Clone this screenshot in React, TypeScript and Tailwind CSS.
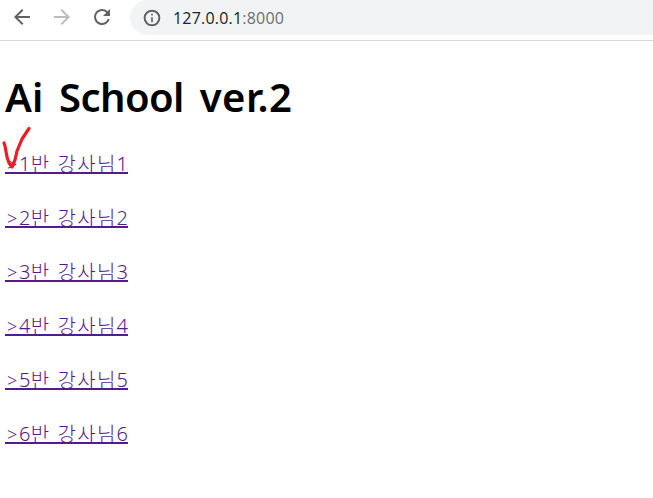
const rooms = [1, 2, 3, 4, 5, 6];

function Toolbar() {
  return (
    <header className="flex h-[41px] items-start border-b border-[#d5d7da] bg-white">
      <div className="flex h-[34px] w-[130px] shrink-0 items-center gap-4 pl-[10px]">
        <svg className="size-6" viewBox="0 0 24 24" fill="#5f6368">
          <path d="M20 11H7.83l5.59-5.59L12 4l-8 8 8 8 1.41-1.41L7.83 13H20v-2z" />
        </svg>
        <svg className="size-6" viewBox="0 0 24 24" fill="#babcbe">
          <path d="M12 4l-1.41 1.41L16.17 11H4v2h12.17l-5.58 5.59L12 20l8-8z" />
        </svg>
        <svg className="size-6" viewBox="0 0 24 24" fill="#5f6368">
          <path d="M17.65 6.35A7.958 7.958 0 0012 4a8 8 0 107.75 10h-2.08A6 6 0 1112 6c1.66 0 3.14.69 4.22 1.78L13 11h7V4l-2.35 2.35z" />
        </svg>
      </div>
      <div className="flex h-[35px] grow items-center rounded-l-full bg-[#f1f3f4] pl-[12px]">
        <svg className="size-5" viewBox="0 0 24 24" fill="#5f6368">
          <path d="M11 7h2v2h-2zm0 4h2v6h-2zm1-9a10 10 0 100 20 10 10 0 000-20zm0 17.6a7.6 7.6 0 110-15.2 7.6 7.6 0 010 15.2z" />
        </svg>
        <span className="ml-[11px] whitespace-nowrap font-['Open_Sans',sans-serif] text-[16px] leading-[34px] tracking-[0.2px] text-[#202124]">
          127.0.0.1<span className="text-[#6b6f73]">:8000</span>
        </span>
      </div>
    </header>
  );
}

export default function App() {
  return (
    <div className="h-[498px] overflow-hidden bg-white">
      <Toolbar />
      <main className="relative pl-[5px] pt-[29px]">
        <h1 className="h-[54px] whitespace-nowrap font-['Noto_Sans',sans-serif] text-[40px] font-semibold leading-[54px] [word-spacing:5.5px] text-black">
          Ai <span className="tracking-[-0.6px]">School</span> <span className="tracking-[0.5px]">ver.2</span>
        </h1>
        <ul className="mt-[26px] flex flex-col gap-[30px]">
          {rooms.map((n) => (
            <li key={n} className="flex">
              <a className="flex h-[24px] w-[123px] whitespace-nowrap border-b-2 border-[#551a8b] font-['Noto_Sans','Noto_Sans_CJK_KR',sans-serif] text-[20px] leading-[27px] text-[#551a8b]">
                <span className="w-[14px] pl-[2px] text-[18px] font-light leading-[28px]">&gt;</span>
                <span className="w-[12px] font-[350]">{n}</span>
                <span className="w-[26px] font-['Noto_Sans_CJK_KR',sans-serif] text-[20px] font-light">반</span>
                <span className="w-[60px] pl-px font-['Noto_Sans_CJK_KR',sans-serif] text-[20px] font-light tracking-[1.3px]">강사님</span>
                <span className="font-[350]">{n}</span>
              </a>
            </li>
          ))}
        </ul>
        <svg className="absolute left-0 top-[84px]" width="36" height="48" viewBox="0 125 36 48" fill="none">
          <path d="M4 143L5 146 7 157 9 163 12 167 15 160 17 151 22 139 29 128.5" stroke="#ed1c24" strokeWidth="3.2" strokeLinecap="round" strokeLinejoin="round" />
        </svg>
      </main>
    </div>
  );
}
